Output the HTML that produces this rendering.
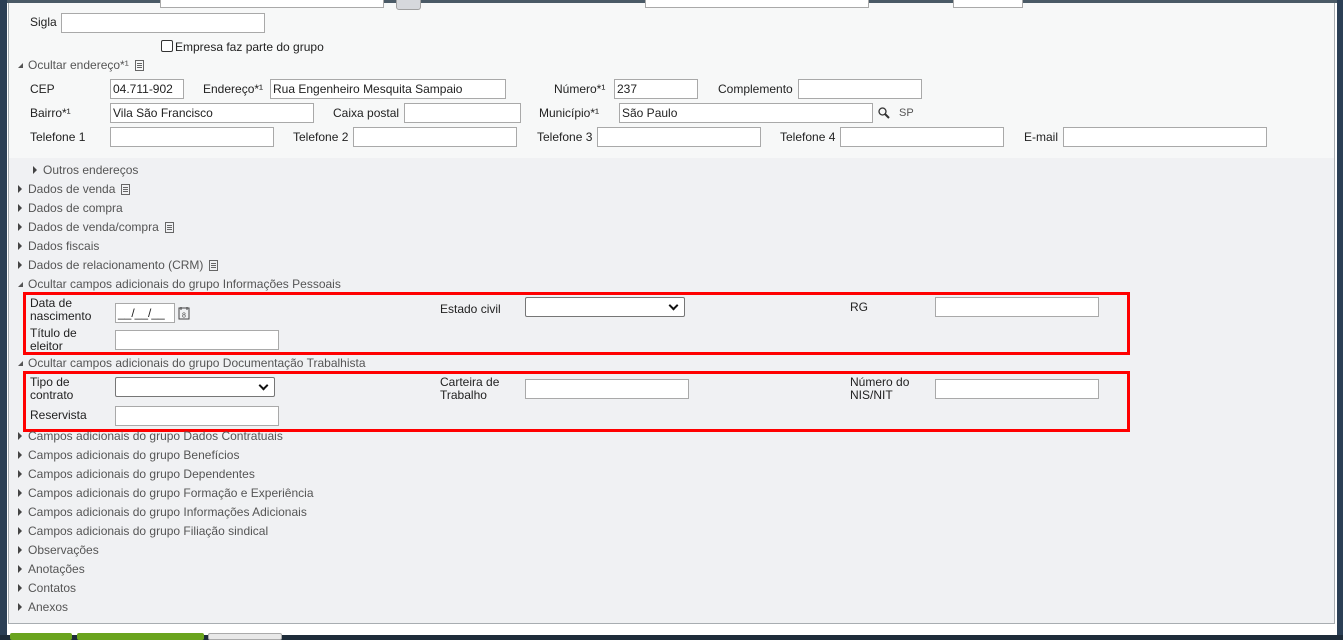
<!DOCTYPE html>
<html><head><meta charset="utf-8"><style>
*{box-sizing:border-box;margin:0;padding:0}
body{width:1343px;height:640px;overflow:hidden;background:#fff;position:relative;font-family:"Liberation Sans","DejaVu Sans",sans-serif;font-size:12px;color:#222}
.a{position:absolute;white-space:nowrap}
.t{margin-top:-1px}
.in{position:absolute;height:20px;background:#fff;border:1px solid #a9a9a9;font-size:12px;padding:2px 2px;line-height:14px}
.sel{position:absolute;height:20px;background:#fff;border:1px solid #767676;border-radius:2px}
.sel:after{content:"";position:absolute;right:7px;top:4px;width:5px;height:5px;border-right:2px solid #111;border-bottom:2px solid #111;transform:rotate(45deg)}
.sec{position:absolute;color:#555;white-space:nowrap;margin-top:-1px}
.tri{display:inline-block;width:0;height:0;border-top:4px solid transparent;border-bottom:4px solid transparent;border-left:4px solid #444;margin-right:6px;vertical-align:0}
.dn{display:inline-block;width:0;height:0;border-left:5px solid transparent;border-bottom:5px solid #555;margin-right:5px;vertical-align:1px}
.doc{display:inline-block;width:9px;height:11px;border:1px solid #666;margin-left:6px;vertical-align:-2px;background:linear-gradient(#666,#666) 1px 2px/5px 1px no-repeat,linear-gradient(#666,#666) 1px 4px/5px 1px no-repeat,linear-gradient(#666,#666) 1px 6px/5px 1px no-repeat}
.red{position:absolute;border:3px solid #f00}
.l2{line-height:13px}
</style></head><body>
<div class="a" style="left:0;top:0;width:1343px;height:3px;background:#4a5a66"></div>
<div class="a" style="left:0;top:0;width:7px;height:640px;background:#2b3f55"></div>
<div class="a" style="left:1337px;top:0;width:6px;height:640px;background:#2b3f55"></div>
<div class="a" style="left:8px;top:3px;width:1327px;height:621px;background:#f0f1f3;border:1px solid #a8adb1;border-top:none"></div>
<div class="a" style="left:9px;top:3px;width:1325px;height:155px;background:#f7f8f8"></div>
<div class="a" style="left:0;top:635px;width:1343px;height:5px;background:#1e2c3a"></div>
<div class="a" style="left:10px;top:633px;width:62px;height:7px;background:#6aa41e;border-radius:2px"></div>
<div class="a" style="left:77px;top:633px;width:127px;height:7px;background:#6aa41e;border-radius:2px"></div>
<div class="a" style="left:208px;top:633px;width:74px;height:7px;background:#e8e8e8;border:1px solid #aaa;border-radius:2px"></div>

<div class="in" style="left:160px;top:-12px;width:224px"></div>
<div class="a" style="left:396px;top:-8px;width:25px;height:18px;background:#d6d8dc;border:1px solid #a0a0a0;border-radius:3px"></div>
<div class="in" style="left:645px;top:-12px;width:224px"></div>
<div class="in" style="left:953px;top:-12px;width:70px"></div>

<div class="a t" style="left:30px;top:16px">Sigla</div>
<div class="in" style="left:61px;top:13px;width:204px"></div>
<div class="a" style="left:161px;top:40px;width:12px;height:12px;border:1px solid #333;border-radius:2px;background:#fff"></div>
<div class="a t" style="left:175px;top:41px">Empresa faz parte do grupo</div>
<div class="sec" style="left:18px;top:59px"><span class="dn"></span>Ocultar endereço*¹<span class="doc"></span></div>

<div class="a t" style="left:30px;top:83px">CEP</div>
<div class="in" style="left:110px;top:79px;width:74px">04.711-902</div>
<div class="a t" style="left:203px;top:83px">Endereço*¹</div>
<div class="in" style="left:270px;top:79px;width:236px">Rua Engenheiro Mesquita Sampaio</div>
<div class="a t" style="left:554px;top:83px">Número*¹</div>
<div class="in" style="left:614px;top:79px;width:84px">237</div>
<div class="a t" style="left:718px;top:83px">Complemento</div>
<div class="in" style="left:798px;top:79px;width:124px"></div>

<div class="a t" style="left:30px;top:107px">Bairro*¹</div>
<div class="in" style="left:110px;top:103px;width:204px">Vila São Francisco</div>
<div class="a t" style="left:333px;top:107px">Caixa postal</div>
<div class="in" style="left:404px;top:103px;width:117px"></div>
<div class="a t" style="left:539px;top:107px">Município*¹</div>
<div class="in" style="left:619px;top:103px;width:254px">São Paulo</div>
<svg class="a" style="left:878px;top:107px" width="12" height="12"><circle cx="4.5" cy="4.5" r="3.5" fill="none" stroke="#333" stroke-width="1.3"/><line x1="7" y1="7" x2="11" y2="11" stroke="#333" stroke-width="2"/></svg>
<div class="a t" style="left:899px;top:108px;color:#555;font-size:11px">SP</div>

<div class="a t" style="left:30px;top:131px">Telefone 1</div>
<div class="in" style="left:110px;top:127px;width:164px"></div>
<div class="a t" style="left:293px;top:131px">Telefone 2</div>
<div class="in" style="left:353px;top:127px;width:164px"></div>
<div class="a t" style="left:537px;top:131px">Telefone 3</div>
<div class="in" style="left:597px;top:127px;width:164px"></div>
<div class="a t" style="left:780px;top:131px">Telefone 4</div>
<div class="in" style="left:840px;top:127px;width:164px"></div>
<div class="a t" style="left:1024px;top:131px">E-mail</div>
<div class="in" style="left:1063px;top:127px;width:204px"></div>

<div class="sec" style="left:33px;top:164px"><span class="tri"></span>Outros endereços</div>
<div class="sec" style="left:18px;top:183px"><span class="tri"></span>Dados de venda<span class="doc"></span></div>
<div class="sec" style="left:18px;top:202px"><span class="tri"></span>Dados de compra</div>
<div class="sec" style="left:18px;top:221px"><span class="tri"></span>Dados de venda/compra<span class="doc"></span></div>
<div class="sec" style="left:18px;top:240px"><span class="tri"></span>Dados fiscais</div>
<div class="sec" style="left:18px;top:259px"><span class="tri"></span>Dados de relacionamento (CRM)<span class="doc"></span></div>
<div class="sec" style="left:18px;top:278px"><span class="dn"></span>Ocultar campos adicionais do grupo Informações Pessoais</div>

<div class="red" style="left:23px;top:292px;width:1107px;height:63px"></div>
<div class="a l2 t" style="left:30px;top:298px">Data de<br>nascimento</div>
<div class="in" style="left:115px;top:303px;width:60px;font-size:12px">__/__/__</div>
<svg class="a" style="left:178px;top:306px" width="12" height="14"><rect x="1" y="2" width="10" height="11" fill="none" stroke="#444"/><line x1="3" y1="1" x2="3" y2="4" stroke="#444"/><line x1="9" y1="1" x2="9" y2="4" stroke="#444"/><text x="6" y="11.5" font-size="7" text-anchor="middle" fill="#444" font-family="Liberation Sans">8</text></svg>
<div class="a t" style="left:440px;top:303px">Estado civil</div>
<div class="sel" style="left:525px;top:297px;width:160px"></div>
<div class="a t" style="left:850px;top:301px">RG</div>
<div class="in" style="left:935px;top:297px;width:164px"></div>
<div class="a l2 t" style="left:30px;top:328px">Título de<br>eleitor</div>
<div class="in" style="left:115px;top:330px;width:164px"></div>

<div class="sec" style="left:18px;top:357px"><span class="dn"></span>Ocultar campos adicionais do grupo Documentação Trabalhista</div>
<div class="red" style="left:23px;top:371px;width:1107px;height:61px"></div>
<div class="a l2 t" style="left:30px;top:377px">Tipo de<br>contrato</div>
<div class="sel" style="left:115px;top:377px;width:160px"></div>
<div class="a l2 t" style="left:440px;top:377px">Carteira de<br>Trabalho</div>
<div class="in" style="left:525px;top:379px;width:164px"></div>
<div class="a l2 t" style="left:850px;top:377px">Número do<br>NIS/NIT</div>
<div class="in" style="left:935px;top:379px;width:164px"></div>
<div class="a t" style="left:30px;top:409px">Reservista</div>
<div class="in" style="left:115px;top:406px;width:164px"></div>

<div class="sec" style="left:18px;top:430px"><span class="tri"></span>Campos adicionais do grupo Dados Contratuais</div>
<div class="sec" style="left:18px;top:449px"><span class="tri"></span>Campos adicionais do grupo Benefícios</div>
<div class="sec" style="left:18px;top:468px"><span class="tri"></span>Campos adicionais do grupo Dependentes</div>
<div class="sec" style="left:18px;top:487px"><span class="tri"></span>Campos adicionais do grupo Formação e Experiência</div>
<div class="sec" style="left:18px;top:506px"><span class="tri"></span>Campos adicionais do grupo Informações Adicionais</div>
<div class="sec" style="left:18px;top:525px"><span class="tri"></span>Campos adicionais do grupo Filiação sindical</div>
<div class="sec" style="left:18px;top:544px"><span class="tri"></span>Observações</div>
<div class="sec" style="left:18px;top:563px"><span class="tri"></span>Anotações</div>
<div class="sec" style="left:18px;top:582px"><span class="tri"></span>Contatos</div>
<div class="sec" style="left:18px;top:601px"><span class="tri"></span>Anexos</div>
</body></html>
